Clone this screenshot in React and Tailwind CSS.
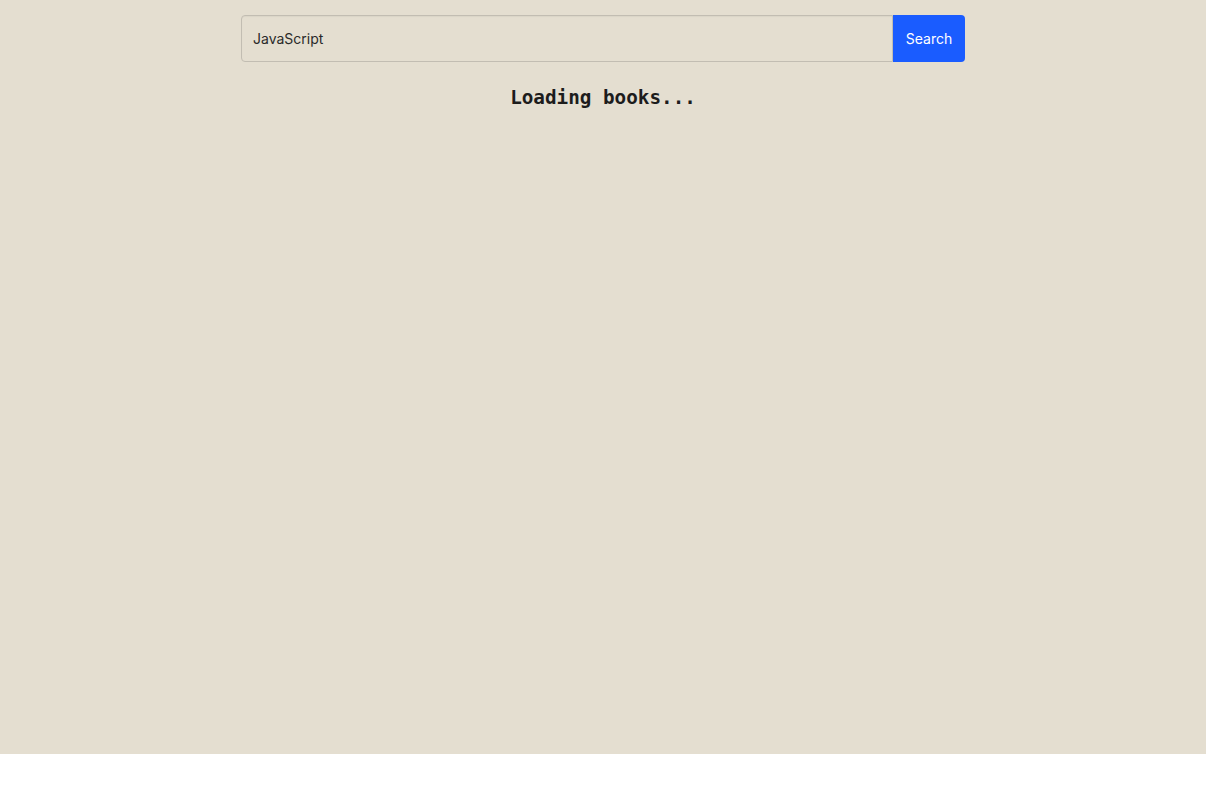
export default function App() {
  return (
    <div className="w-full h-[754px] bg-[#e4ded0] pt-[15px] font-['Inter','Noto_Sans',sans-serif]">
      <div className="w-[724px] mx-auto flex h-[47px]">
        <input
          defaultValue="JavaScript"
          className="flex-1 h-full border border-[#c2bdb2] rounded-l-[4px] bg-[#e4ded0] pl-[11px] text-[14px] text-[#2a2a2a] outline-none font-['Inter',sans-serif] shadow-[inset_0_1px_1px_rgba(0,0,0,0.04)]"
        />
        <button className="w-[72px] h-full bg-[#1a5cff] text-white text-[14px] rounded-r-[4px]">Search</button>
      </div>
      <p className="text-center mt-[24px] text-[19.3px] font-bold text-[#1c1c1c] leading-[24px] font-['DejaVu_Sans_Mono','Liberation_Mono',monospace]">
        Loading books...
      </p>
    </div>
  );
}
